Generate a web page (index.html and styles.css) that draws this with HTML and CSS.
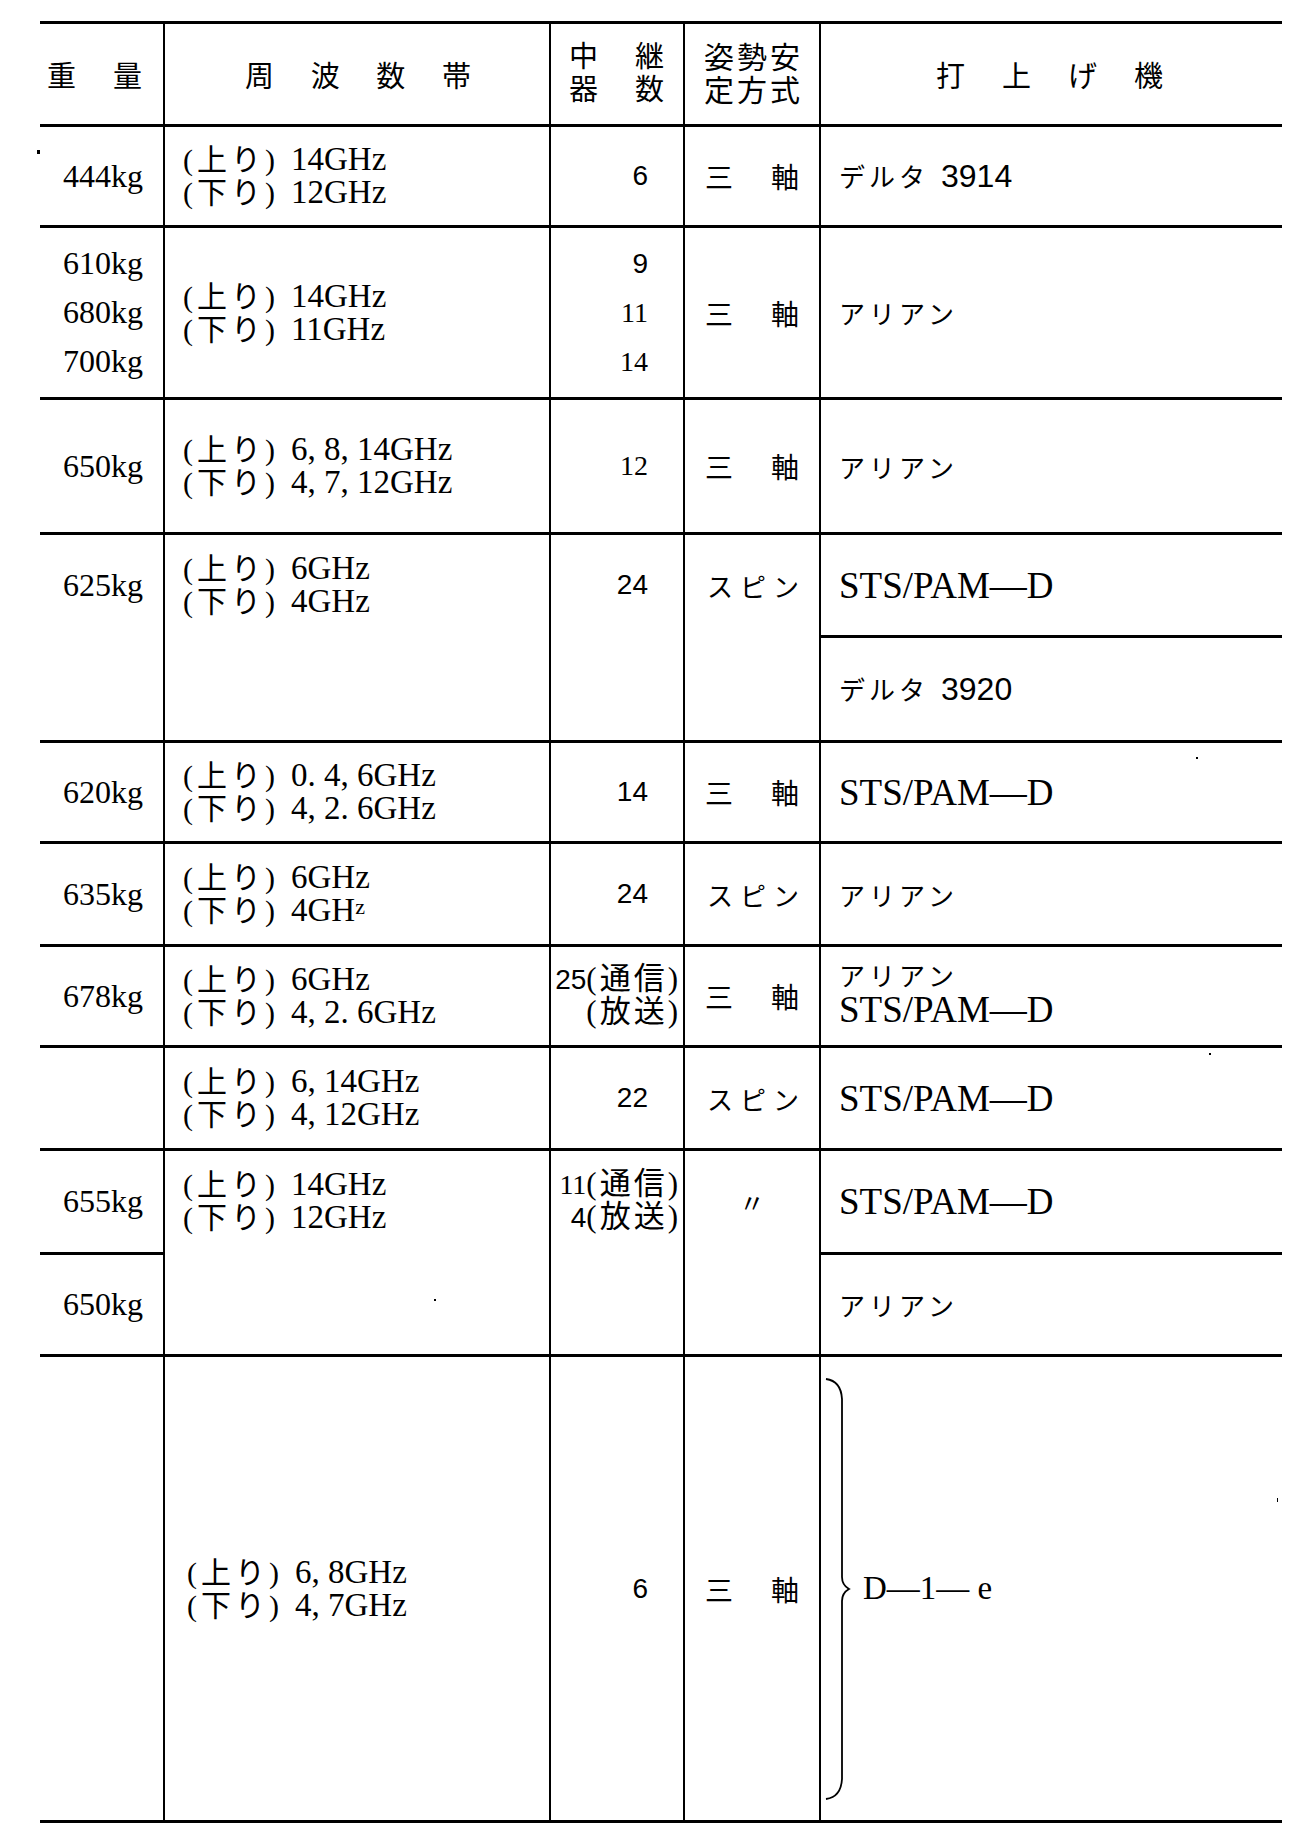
FILE: index.html
```html
<!DOCTYPE html>
<html lang="ja">
<head>
<meta charset="utf-8">
<title>衛星諸元表</title>
<link rel="stylesheet" href="styles.css">
</head>
<body>
<div class="page">
<table class="spec">
<colgroup><col class="col-w"><col class="col-f"><col class="col-n"><col class="col-s"><col class="col-l"></colgroup>
<thead>
<tr class="r-head">
<th class="c-w"><div class="spread h-w"><span>重</span><span>量</span></div></th>
<th><div class="spread h-f"><span>周</span><span>波</span><span>数</span><span>帯</span></div></th>
<th><div class="h-n"><div class="spread"><span>中</span><span>継</span></div><div class="spread"><span>器</span><span>数</span></div></div></th>
<th><div class="h-s">姿勢安<br>定方式</div></th>
<th class="c-l"><div class="spread h-l"><span>打</span><span>上</span><span>げ</span><span>機</span></div></th>
</tr>
</thead>
<tbody>
<tr class="r1">
<td class="c-w wt">444kg</td>
<td class="fq"><div><span class="ud">(上り)</span>14GHz</div><div><span class="ud">(下り)</span>12GHz</div></td>
<td class="num sans">6</td>
<td><div class="spread att"><span>三</span><span>軸</span></div></td>
<td class="c-l lv"><span class="kata">デルタ</span><span class="sans model">3914</span></td>
</tr>
<tr class="r2">
<td class="c-w wt stack"><div>610kg</div><div>680kg</div><div>700kg</div></td>
<td class="fq"><div><span class="ud">(上り)</span>14GHz</div><div><span class="ud">(下り)</span>11GHz</div></td>
<td class="num stack"><div class="sans">9</div><div>11</div><div>14</div></td>
<td><div class="spread att"><span>三</span><span>軸</span></div></td>
<td class="c-l lv"><span class="kata">アリアン</span></td>
</tr>
<tr class="r3">
<td class="c-w wt">650kg</td>
<td class="fq"><div><span class="ud">(上り)</span>6, 8, 14GHz</div><div><span class="ud">(下り)</span>4, 7, 12GHz</div></td>
<td class="num">12</td>
<td><div class="spread att"><span>三</span><span>軸</span></div></td>
<td class="c-l lv"><span class="kata">アリアン</span></td>
</tr>
<tr class="r4a">
<td class="c-w wt top" rowspan="2"><div class="tbox">625kg</div></td>
<td class="fq top" rowspan="2"><div class="tbox"><div><span class="ud">(上り)</span>6GHz</div><div><span class="ud">(下り)</span>4GHz</div></div></td>
<td class="num sans top" rowspan="2"><div class="tbox">24</div></td>
<td class="top" rowspan="2"><div class="tbox"><div class="spread att spin"><span>ス</span><span>ピ</span><span>ン</span></div></div></td>
<td class="c-l lv latin">STS/PAM—D</td>
</tr>
<tr class="r4b">
<td class="c-l lv"><span class="kata">デルタ</span><span class="sans model">3920</span></td>
</tr>
<tr class="r5">
<td class="c-w wt">620kg</td>
<td class="fq"><div><span class="ud">(上り)</span>0. 4, 6GHz</div><div><span class="ud">(下り)</span>4, 2. 6GHz</div></td>
<td class="num sans">14</td>
<td><div class="spread att"><span>三</span><span>軸</span></div></td>
<td class="c-l lv latin">STS/PAM—D</td>
</tr>
<tr class="r6">
<td class="c-w wt">635kg</td>
<td class="fq"><div><span class="ud">(上り)</span>6GHz</div><div><span class="ud">(下り)</span>4GH<span class="raised">z</span></div></td>
<td class="num sans">24</td>
<td><div class="spread att spin"><span>ス</span><span>ピ</span><span>ン</span></div></td>
<td class="c-l lv"><span class="kata">アリアン</span></td>
</tr>
<tr class="r7">
<td class="c-w wt">678kg</td>
<td class="fq"><div><span class="ud">(上り)</span>6GHz</div><div><span class="ud">(下り)</span>4, 2. 6GHz</div></td>
<td class="num wide"><div><span class="sans">25</span><span class="pj">(通信)</span></div><div><span class="pj">(放送)</span></div></td>
<td><div class="spread att"><span>三</span><span>軸</span></div></td>
<td class="c-l lv two"><div class="kata kl">アリアン</div><div class="latin ll">STS/PAM—D</div></td>
</tr>
<tr class="r8">
<td class="c-w wt"></td>
<td class="fq"><div><span class="ud">(上り)</span>6, 14GHz</div><div><span class="ud">(下り)</span>4, 12GHz</div></td>
<td class="num sans">22</td>
<td><div class="spread att spin"><span>ス</span><span>ピ</span><span>ン</span></div></td>
<td class="c-l lv latin">STS/PAM—D</td>
</tr>
<tr class="r9a">
<td class="c-w wt">655kg</td>
<td class="fq top" rowspan="2"><div class="tbox"><div><span class="ud">(上り)</span>14GHz</div><div><span class="ud">(下り)</span>12GHz</div></div></td>
<td class="num wide top" rowspan="2"><div class="tbox"><div><span>11</span><span class="pj">(通信)</span></div><div><span class="sans">4</span><span class="pj">(放送)</span></div></div></td>
<td class="top" rowspan="2"><div class="tbox"><div class="ditto">〃</div></div></td>
<td class="c-l lv latin">STS/PAM—D</td>
</tr>
<tr class="r9b">
<td class="c-w wt">650kg</td>
<td class="c-l lv"><span class="kata">アリアン</span></td>
</tr>
<tr class="r10">
<td class="c-w wt"></td>
<td class="fq fq-last"><div><span class="ud">(上り)</span>6, 8GHz</div><div><span class="ud">(下り)</span>4, 7GHz</div></td>
<td class="num sans">6</td>
<td><div class="spread att"><span>三</span><span>軸</span></div></td>
<td class="c-l brace-cell">
<div class="brace-wrap">
<svg class="brace" width="28" height="424" viewBox="0 0 28 424"><path d="M3 2 Q18 4 19 22 L19 200 Q19 208 26 212 Q19 216 19 224 L19 402 Q18 420 3 422" fill="none" stroke="#000" stroke-width="1.8"/></svg>
<span class="latin d1e">D—1— e</span>
</div>
</td>
</tr>
</tbody>
</table>
<span class="speck s1"></span>
<span class="speck s2"></span>
<span class="speck s3"></span>
<span class="speck s4"></span>
<span class="speck s5"></span>
</div>
</body>
</html>
```

FILE: styles.css
```css
* { box-sizing: border-box; }
html, body { margin: 0; background: #fff; }
body {
  font-family: "Liberation Serif", "Noto Sans CJK JP", serif;
  color: #000;
}
.page {
  position: relative;
  width: 1301px;
  height: 1841px;
  padding: 21px 0 0 40px;
}
.spec {
  border-collapse: collapse;
  table-layout: fixed;
  width: 1242px;
}
.col-w { width: 124px; }
.col-f { width: 386px; }
.col-n { width: 134px; }
.col-s { width: 136px; }
.col-l { width: 462px; }

th, td {
  padding: 0;
  vertical-align: middle;
  font-weight: normal;
}
.spec th, .spec td {
  border-top: 3px solid #000;
  border-bottom: 3px solid #000;
  border-left: 2px solid #000;
  border-right: 2px solid #000;
}
.spec .c-w { border-left: none; }
.spec .c-l { border-right: none; }

.r-head { height: 103px; }
.r1 { height: 101px; }
.r2 { height: 172px; }
.r3 { height: 135px; }
.r4a { height: 103px; }
.r4b { height: 105px; }
.r5 { height: 101px; }
.r6 { height: 103px; }
.r7 { height: 101px; }
.r8 { height: 103px; }
.r9a { height: 104px; }
.r9b { height: 102px; }
.r10 { height: 466px; }

/* header */
th {
  font-family: "Liberation Serif", "Noto Sans CJK JP", serif;
  font-size: 29px;
}
.spread { display: flex; justify-content: space-between; }
.h-w { padding: 0 21px 0 7px; }
.h-f { padding: 0 78px 0 80px; }
.h-n { padding: 0 19px 0 18px; line-height: 33px; }
.h-s {
  font-size: 30px;
  line-height: 33px;
  letter-spacing: 3px;
  text-align: center;
  padding-left: 3px;
}
.h-l { padding: 0 119px 0 115px; }

/* body cells */
.sans { font-family: "Liberation Sans", sans-serif; }
.wt {
  text-align: right;
  padding-right: 20px;
  font-size: 32px;
}
.stack { line-height: 49px; }
.fq {
  padding-left: 18px;
  font-size: 33px;
  line-height: 33px;
  white-space: nowrap;
}
.fq-last { padding-left: 22px; }
.ud {
  font-size: 30px;
  letter-spacing: 4px;
  margin-right: 12px;
}
.raised {
  font-size: 22px;
  vertical-align: 7px;
  line-height: 1;
}
.num {
  text-align: right;
  padding-right: 35px;
  font-size: 28px;
}
.num.wide {
  padding-right: 2px;
  line-height: 32px;
  white-space: nowrap;
}
.pj {
  font-family: "Liberation Serif", "Noto Sans CJK JP", serif;
  font-size: 31px;
  letter-spacing: 3px;
}
.att {
  font-family: "Noto Sans CJK JP", sans-serif;
  font-size: 28px;
  padding: 0 20px 0 20px;
}
.spin { font-size: 26px; padding-left: 22px; }
.ditto {
  text-align: center;
  font-size: 26px;
  font-family: "Noto Sans CJK JP", sans-serif;
}
.lv {
  padding-left: 18px;
  font-size: 30px;
  white-space: nowrap;
}
.kata {
  font-family: "Noto Sans CJK JP", sans-serif;
  font-size: 26px;
  letter-spacing: 4px;
}
.model { font-size: 32px; margin-left: 12px; }
.latin { font-family: "Liberation Serif", serif; font-size: 37px; }
.two .kl {
  font-family: "Liberation Serif", "Noto Sans CJK JP", serif;
  line-height: 30px;
}
.two .ll { line-height: 38px; margin-top: -2px; }

.spec .top { vertical-align: top; }
.tbox {
  height: 100px;
  display: flex;
  flex-direction: column;
  justify-content: center;
}

.brace-cell { padding-left: 2px; }
.brace-wrap { display: flex; align-items: center; }
.brace { flex: none; }
.d1e { font-size: 33px; margin-left: 12px; }

/* scan specks */
.speck { position: absolute; background: #000; }
.s1 { left: 37px; top: 150px; width: 3px; height: 4px; }
.s2 { left: 1196px; top: 757px; width: 2px; height: 2px; }
.s3 { left: 1209px; top: 1053px; width: 2px; height: 2px; }
.s4 { left: 434px; top: 1299px; width: 2px; height: 2px; }
.s5 { left: 1277px; top: 1498px; width: 1px; height: 4px; }
```
